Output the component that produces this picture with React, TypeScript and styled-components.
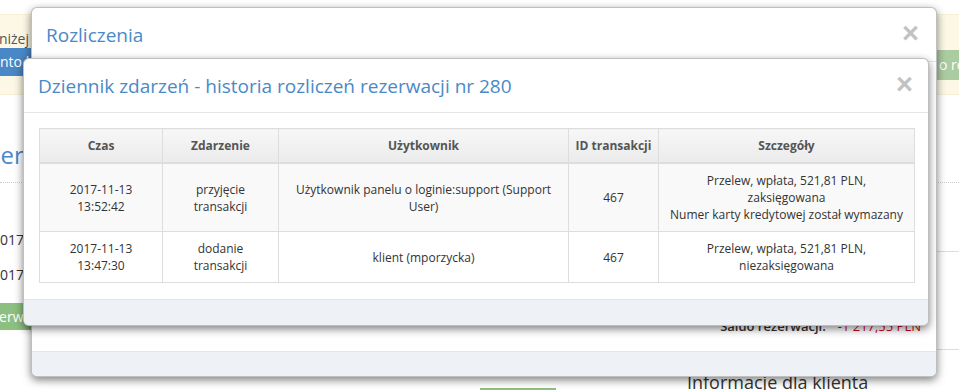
import React from "react";
import styled, { createGlobalStyle } from "styled-components";

const Global = createGlobalStyle`
  * { box-sizing: border-box; }
  html, body { margin: 0; padding: 0; background: #fff; }
  body {
    font-family: "Open Sans", "Noto Sans", sans-serif;
    font-size: 14px;
    color: #333;
    width: 959px;
    height: 390px;
    overflow: hidden;
  }
`;

const Page = styled.div`
  position: relative;
  width: 959px;
  height: 390px;
  overflow: hidden;
`;

/* ---------- background page ---------- */

const Alert = styled.div`
  margin-top: 14px;
  height: 81px;
  background: #fcf8e5;
  border-top: 1px solid #f8efd2;
  border-bottom: 1px solid #f8efd2;
  display: flex;
  justify-content: space-between;
  align-items: flex-start;
  overflow: hidden;
`;

const AlertLead = styled.div`
  display: flex;
  flex-direction: column;
  padding-top: 15px;
  width: 80px;
`;

const ClipEnd = styled.div<{ $w: number }>`
  width: ${(p) => p.$w}px;
  overflow: hidden;
  display: flex;
  justify-content: flex-end;
  white-space: nowrap;
  line-height: 18px;
  color: #555;
`;

const Btn = styled.div<{ $bg: string; $h: number; $indent: number }>`
  background: ${(p) => p.$bg};
  color: #fff;
  height: ${(p) => p.$h}px;
  line-height: ${(p) => p.$h}px;
  white-space: nowrap;
  overflow: hidden;
  text-indent: ${(p) => p.$indent}px;
  font-size: 14px;
`;

const AlertTail = styled.div`
  margin-top: 35px;
  width: 22px;
  overflow: hidden;
`;

const Columns = styled.div`
  display: grid;
  grid-template-columns: 480px 1fr;
`;

const LeftCol = styled.div`
  display: flex;
  flex-direction: column;
`;

const SectionTitle = styled.h3`
  margin: 47px 0 0;
  font-size: 24px;
  font-weight: 400;
  line-height: 26px;
  color: #4a89c8;
  text-indent: -39px;
  white-space: nowrap;
  overflow: hidden;
  padding-bottom: 14px;
  border-bottom: 1px dotted #ccc;
`;

const DateLine = styled.div<{ $mt: number }>`
  margin-top: ${(p) => p.$mt}px;
  line-height: 20px;
  text-indent: -8px;
  white-space: nowrap;
  overflow: hidden;
  color: #333;
`;

const LeftAction = styled.div`
  margin-top: 18px;
`;

const RightCol = styled.div`
  display: flex;
  flex-direction: column;
`;

const RuleBlock = styled.div<{ $h: number; $dotted?: boolean }>`
  height: ${(p) => p.$h}px;
  border-bottom: 1px ${(p) => (p.$dotted ? "dotted #ccc" : "solid #ddd")};
`;

const InfoRow = styled.div`
  display: flex;
  align-items: flex-start;
  margin-top: 22px;
`;

const GreenStub = styled.div`
  width: 76px;
  height: 2px;
  margin-top: 16px;
  background: #8dbf81;
`;

const InfoTitle = styled.h4`
  margin: 0 0 0 131px;
  font-size: 18px;
  font-weight: 400;
  line-height: 20px;
  color: #333;
  white-space: nowrap;
`;

/* ---------- modals ---------- */

const ModalBox = styled.div<{ $left: number; $top: number; $height: number }>`
  position: absolute;
  left: ${(p) => p.$left}px;
  top: ${(p) => p.$top}px;
  width: 906px;
  height: ${(p) => p.$height}px;
  background: #fff;
  border: 1px solid rgba(0, 0, 0, 0.25);
  border-radius: 6px;
  box-shadow: 0 3px 9px rgba(0, 0, 0, 0.5);
  display: flex;
  flex-direction: column;
  overflow: hidden;
`;

const ModalHeader = styled.div`
  flex: none;
  height: 54px;
  padding: 0 15px 0 14px;
  display: flex;
  align-items: center;
  justify-content: space-between;
  border-bottom: 1px solid #e5e5e5;
`;

const ModalTitle = styled.h4`
  margin: 0;
  font-size: 19px;
  font-weight: 400;
  line-height: 26px;
  color: #4a89c8;
`;

const Close = styled.button<{ $mr: number }>`
  border: 0;
  background: none;
  padding: 0 0 3px;
  margin-right: ${(p) => p.$mr}px;
  font-family: "Liberation Sans", Arial, sans-serif;
  font-size: 29px;
  font-weight: 700;
  line-height: 1;
  color: #c2c2c2;
  cursor: pointer;
`;

const ModalBody = styled.div<{ $end?: boolean }>`
  flex: 1;
  padding: 15px;
  display: flex;
  flex-direction: column;
  justify-content: ${(p) => (p.$end ? "flex-end" : "flex-start")};
`;

const ModalFooter = styled.div<{ $h: number }>`
  flex: none;
  height: ${(p) => p.$h}px;
  background: #eef1f5;
  border-top: 1px solid #e5e5e5;
`;

const SaldoRow = styled.div`
  display: flex;
  justify-content: flex-end;
  gap: 12px;
  line-height: 20px;
  font-size: 13px;
`;

const SaldoLabel = styled.span`
  font-weight: 600;
  color: #333;
`;

const SaldoValue = styled.span`
  color: #d0021b;
`;

const Table = styled.table`
  width: 875px;
  border-collapse: collapse;
  table-layout: fixed;
  font-size: 12px;
  line-height: 17px;
  color: #333;
`;

const Th = styled.th<{ $w: number }>`
  width: ${(p) => p.$w}px;
  padding: 8px 4px;
  border: 1px solid #ddd;
  border-bottom: 2px solid #ddd;
  background: linear-gradient(#f7f7f7, #ebebeb);
  color: #555;
  font-weight: 700;
  text-align: center;
  vertical-align: middle;
  white-space: nowrap;
`;

const Tr = styled.tr<{ $striped?: boolean }>`
  background: ${(p) => (p.$striped ? "#f9f9f9" : "#fff")};
`;

const Td = styled.td`
  padding: 8px;
  border: 1px solid #ddd;
  text-align: center;
  vertical-align: middle;
`;

const columns = [
  { label: "Czas", w: 123 },
  { label: "Zdarzenie", w: 116 },
  { label: "Użytkownik", w: 290 },
  { label: "ID transakcji", w: 90 },
  { label: "Szczegóły", w: 256 },
];

const rows = [
  {
    time: "2017-11-13 13:52:42",
    event: "przyjęcie transakcji",
    user: "Użytkownik panelu o loginie:support (Support User)",
    id: "467",
    details: ["Przelew, wpłata, 521,81 PLN, zaksięgowana", "Numer karty kredytowej został wymazany"],
  },
  {
    time: "2017-11-13 13:47:30",
    event: "dodanie transakcji",
    user: "klient (mporzycka)",
    id: "467",
    details: ["Przelew, wpłata, 521,81 PLN, niezaksięgowana"],
  },
];

export default function App() {
  return (
    <Page>
      <Global />
      <Alert>
        <AlertLead>
          <ClipEnd $w={29}>Szczegóły poniżej</ClipEnd>
          <Btn $bg="#4a87c6" $h={28} $indent={-17}>
            Konto klienta
          </Btn>
        </AlertLead>
        <AlertTail>
          <Btn $bg="#abcba1" $h={30} $indent={2}>
            o rezerwacji
          </Btn>
        </AlertTail>
      </Alert>
      <Columns>
        <LeftCol>
          <SectionTitle>Rezerwacja</SectionTitle>
          <DateLine $mt={47}>2017 godz. 13:47</DateLine>
          <DateLine $mt={15}>2017 godz. 13:52</DateLine>
          <LeftAction>
            <Btn $bg="#8dbf81" $h={27} $indent={-24}>
              Rezerwacja
            </Btn>
          </LeftAction>
        </LeftCol>
        <RightCol>
          <RuleBlock $h={88} $dotted />
          <RuleBlock $h={69} />
          <RuleBlock $h={98} />
          <InfoRow>
            <GreenStub />
            <InfoTitle>Informacje dla klienta</InfoTitle>
          </InfoRow>
        </RightCol>
      </Columns>

      <ModalBox $left={31} $top={7} $height={370}>
        <ModalHeader>
          <ModalTitle>Rozliczenia</ModalTitle>
          <Close $mr={2}>×</Close>
        </ModalHeader>
        <ModalBody $end>
          <SaldoRow>
            <SaldoLabel>Saldo rezerwacji:</SaldoLabel>
            <SaldoValue>-1 217,55 PLN</SaldoValue>
          </SaldoRow>
        </ModalBody>
        <ModalFooter $h={25} />
      </ModalBox>

      <ModalBox $left={23} $top={58} $height={268}>
        <ModalHeader>
          <ModalTitle>Dziennik zdarzeń - historia rozliczeń rezerwacji nr 280</ModalTitle>
          <Close $mr={0}>×</Close>
        </ModalHeader>
        <ModalBody>
          <Table>
            <thead>
              <tr>
                {columns.map((c) => (
                  <Th key={c.label} $w={c.w}>
                    {c.label}
                  </Th>
                ))}
              </tr>
            </thead>
            <tbody>
              {rows.map((r, i) => (
                <Tr key={i} $striped={i % 2 === 0}>
                  <Td>{r.time}</Td>
                  <Td>{r.event}</Td>
                  <Td>{r.user}</Td>
                  <Td>{r.id}</Td>
                  <Td>
                    {r.details.map((d, j) => (
                      <div key={j}>{d}</div>
                    ))}
                  </Td>
                </Tr>
              ))}
            </tbody>
          </Table>
        </ModalBody>
        <ModalFooter $h={26} />
      </ModalBox>
    </Page>
  );
}
